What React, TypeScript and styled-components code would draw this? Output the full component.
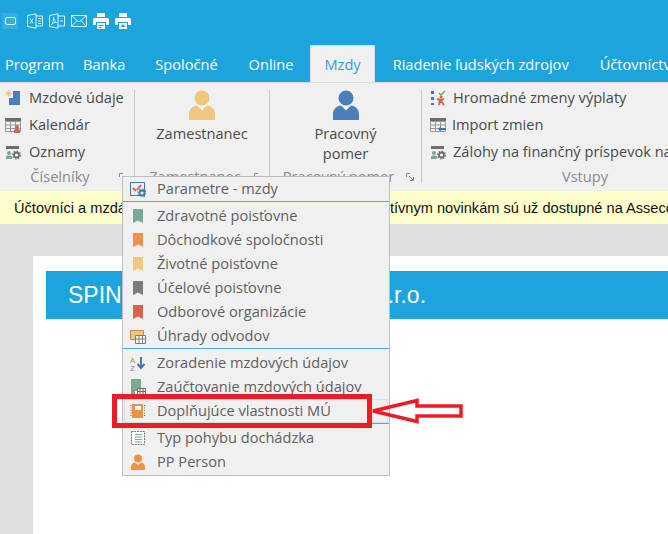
import React from 'react';
import styled, { createGlobalStyle } from 'styled-components';

const GlobalStyle = createGlobalStyle`
  html, body {
    margin: 0;
    padding: 0;
    background: #e0e0e0;
  }
  body {
    font-family: "Open Sans", "Noto Sans", sans-serif;
  }
`;

const Window = styled.div`
  position: relative;
  width: 668px;
  height: 534px;
  overflow: hidden;
  display: flex;
  flex-direction: column;
  background: #e0e0e0;
`;

const QuickBar = styled.div`
  height: 45px;
  box-sizing: border-box;
  flex: none;
  background: #1ca4dd;
  display: flex;
  align-items: center;
  gap: 6px;
  padding: 0 0 3px 2px;
`;

const QuickIcon = styled.svg`
  width: 16px;
  height: 16px;
  flex: none;
`;

const RestoreButton = styled.div`
  width: 16px;
  height: 16px;
  margin-right: 3px;
  display: flex;
  align-items: center;
  justify-content: center;
  background: #36aee1;
`;

const RestoreGlyph = styled.div`
  width: 9px;
  height: 6px;
  border: 1px solid #fff;
  border-radius: 2px;
`;

const TabBar = styled.div`
  height: 37px;
  flex: none;
  background: #1ca4dd;
  display: flex;
  white-space: nowrap;
  font-size: 14.6px;
`;

const Tab = styled.div<{ $active?: boolean; $left?: number; $right?: number }>`
  box-sizing: border-box;
  height: 37px;
  padding: 0 ${(p) => p.$right ?? 15}px 0 ${(p) => p.$left ?? 16}px;
  display: flex;
  align-items: center;
  color: ${(p) => (p.$active ? '#2aa5dc' : '#fff')};
  background: ${(p) => (p.$active ? '#f0f0f0' : 'transparent')};
  box-shadow: ${(p) => (p.$active ? 'inset 0 1px 0 #dcdcdc, inset 1px 0 0 #dcdcdc, inset -1px 0 0 #dcdcdc' : 'none')};
`;

const Ribbon = styled.div`
  height: 109px;
  flex: none;
  box-sizing: border-box;
  background: #f0f0f0;
  border-top: 1px solid #dcdcdc;
  display: flex;
  white-space: nowrap;
  font-size: 14.6px;
  color: #4a4a4a;
`;

const Group = styled.div<{ $width: number }>`
  position: relative;
  width: ${(p) => p.$width}px;
  flex: none;
  display: flex;
  flex-direction: column;
`;

const GroupBody = styled.div`
  height: 83px;
  flex: none;
  display: flex;
  flex-direction: column;
`;

const GroupRows = styled(GroupBody)<{ $pad: number }>`
  padding: 1px 0 0 ${(p) => p.$pad}px;
  box-sizing: border-box;
`;

const RibbonRow = styled.div<{ $gap?: number }>`
  height: 27px;
  box-sizing: border-box;
  padding-bottom: 1px;
  display: flex;
  align-items: center;
  gap: ${(p) => p.$gap ?? 8}px;
`;

const LargeButton = styled(GroupBody)`
  align-items: center;
  padding-top: 6px;
  box-sizing: border-box;
  text-align: center;
  line-height: 20px;
`;

const LargeIcon = styled.svg`
  width: 32px;
  height: 30px;
  margin: 1px 0 3px;
`;

const GroupLabel = styled.div<{ $launcher?: boolean }>`
  height: 22px;
  line-height: 20px;
  text-align: center;
  padding-right: ${(p) => (p.$launcher ? 14 : 0)}px;
  color: #8b8b8b;
  font-size: 14.6px;
`;

const Launcher = styled.svg`
  position: absolute;
  right: 7px;
  bottom: 10px;
  width: 8px;
  height: 8px;
`;

const Divider = styled.div`
  width: 1px;
  flex: none;
  margin: 7px 0 8px;
  background: #c8c8c8;
`;

const Banner = styled.div`
  height: 33px;
  flex: none;
  background: #ffffcc;
  display: flex;
  align-items: center;
  padding-left: 14px;
  white-space: nowrap;
  color: #111;
  font-family: "Liberation Sans", sans-serif;
  font-size: 14.6px;
`;

const Gap = styled.span<{ $width: number }>`
  display: inline-block;
  flex: none;
  width: ${(p) => p.$width}px;
`;

const Content = styled.div`
  flex: 1;
  margin: 32px 0 0 33px;
  padding: 15px 0 0 13px;
  background: #fff;
`;

const PageHeader = styled.div`
  height: 48px;
  background: #1ca4dd;
  display: flex;
  align-items: center;
  padding-left: 22px;
  white-space: nowrap;
  color: #fff;
  font-family: "Liberation Sans", sans-serif;
  font-size: 23px;
`;

const Menu = styled.div`
  position: absolute;
  left: 122px;
  top: 176px;
  width: 268px;
  box-sizing: border-box;
  background: #f0f0f0;
  border: 1px solid #bdbdbd;
  color: #606060;
  font-size: 14.6px;
  white-space: nowrap;
  padding-bottom: 1px;
`;

const MenuRow = styled.div<{ $selected?: boolean }>`
  height: 24px;
  box-sizing: border-box;
  display: flex;
  align-items: center;
  gap: 11px;
  padding: 0 0 2px 5px;
  margin: 0 1px;
  border: 1px solid ${(p) => (p.$selected ? '#d3dde6' : 'transparent')};
`;

const MenuIcon = styled.svg`
  width: 16px;
  height: 16px;
  flex: none;
  margin-top: 2px;
`;

const MenuRule = styled.div`
  height: 1px;
  margin-bottom: 2px;
  background: #43b0e0;
`;

const Callout = styled.div`
  position: absolute;
  left: 112px;
  top: 394px;
  width: 260px;
  height: 34px;
  box-sizing: border-box;
  border: 5px solid #ed1c24;
`;

const CalloutArrow = styled.svg`
  position: absolute;
  left: 370px;
  top: 396px;
  width: 94px;
  height: 30px;
`;

const ExcelGlyph = () => (
  <QuickIcon viewBox="0 0 16 16" fill="none" stroke="#dff3fb" strokeWidth="1">
    <path d="M.5 2.500 9 .8v14.400l-8.500-1.700zM9 3h6.500v10H9M11 5.500h3M11 8h3M11 10.500h3" />
    <path d="M3 5.500l3 5M6 5.500l-3 5" />
  </QuickIcon>
);

const PdfGlyph = () => (
  <QuickIcon viewBox="0 0 16 16" fill="none" stroke="#dff3fb" strokeWidth="1">
    <path d="M.5 2.500 9 .8v14.400l-8.500-1.700zM9 3h6.500v10H9M11 8h3" />
    <path d="M2 12c2-2 3-5 2.500-7.500C4 3.500 6 9 7.500 9.500 6 9 3.500 10 2 12z" />
  </QuickIcon>
);

const MailGlyph = () => (
  <QuickIcon viewBox="0 0 16 16" fill="none" stroke="#dff3fb" strokeWidth="1">
    <path d="M.5 2.500h15v11H.5zM.5 2.500 8 9l7.500-6.500M.5 13.500 6 7.500M15.500 13.500 10 7.500" />
  </QuickIcon>
);

const PrintGlyph = ({ preview }: { preview?: boolean }) => (
  <QuickIcon viewBox="0 0 16 16">
    <path fill="#fff" d="M4 0h8v4H4zM1.500 5h13A1.500 1.500 0 0 1 16 6.500V12h-3V9H3v3H0V6.500A1.500 1.500 0 0 1 1.500 5z" />
    <path fill="#fff" d="M4 10h8v6H4z" />
    {preview ? <path fill="#1ca4dd" d="M8 11l2.500 3h-5z" /> : <path fill="#1ca4dd" d="M5.500 12h5v1h-5zM5.500 14h3v1h-3z" />}
  </QuickIcon>
);

const PersonGlyph = ({ color }: { color: string }) => (
  <LargeIcon viewBox="0 0 32 30">
    <circle cx="16" cy="8" r="7.500" fill={color} />
    <path fill={color} d="M3 30v-6c0-5 4-8 8-8.500l5 5 5-5c4 .5 8 3.500 8 8.500v6z" />
  </LargeIcon>
);

const Launch = () => (
  <Launcher viewBox="0 0 8 8" fill="none" stroke="#8a8a8a">
    <path d="M.5 4V.5H4M7.500 4v3.500H4M3 3l4 4" />
  </Launcher>
);

const SmallIcon = ({ children }: { children: React.ReactNode }) => (
  <MenuIcon viewBox="0 0 16 16">{children}</MenuIcon>
);

const Ribbonmark = ({ color }: { color: string }) => (
  <SmallIcon>
    <path fill={color} d="M3 1h10v14l-5-2.500L3 15z" />
  </SmallIcon>
);

const gear = (x: number, y: number, c: string) => (
  <>
    <circle cx={x} cy={y} r="2.500" fill="none" stroke={c} strokeWidth="1.800" />
    <circle cx={x} cy={y} r="4" fill="none" stroke={c} strokeWidth="1.200" strokeDasharray="1.500 1.600" />
  </>
);

const calendarBase = (
  <>
    <path fill="#6d6d6d" d="M0 1h16v3H0z" />
    <path fill="none" stroke="#9a9a9a" d="M.5 4.500h15v10H.5zM5.500 4.500v10M10.500 4.500v10M.5 8h15M.5 11.500h15" />
  </>
);

export default function App() {
  return (
    <Window>
      <GlobalStyle />

      <QuickBar>
        <RestoreButton>
          <RestoreGlyph />
        </RestoreButton>
        <ExcelGlyph />
        <PdfGlyph />
        <MailGlyph />
        <PrintGlyph />
        <PrintGlyph preview />
      </QuickBar>

      <TabBar>
        <Tab $left={5} $right={3}>Program</Tab>
        <Tab $right={14}>Banka</Tab>
        <Tab>Spoločné</Tab>
        <Tab $right={17}>Online</Tab>
        <Tab $active $left={14} $right={14}>Mzdy</Tab>
        <Tab $left={18}>Riadenie ľudských zdrojov</Tab>
        <Tab>Účtovníctvo</Tab>
      </TabBar>

      <Ribbon>
        <Group $width={134}>
          <GroupRows $pad={5}>
            <RibbonRow>
              <SmallIcon>
                <circle cx="3.500" cy="3.500" r="2" fill="#efc77e" />
                <path stroke="#efc77e" d="M3.500 0v7M0 3.500h7M1 1l5 5M6 1 1 6" />
                <path fill="#4a7fb8" d="M8 1h7v14H4V8h4z" />
              </SmallIcon>
              Mzdové údaje
            </RibbonRow>
            <RibbonRow>
              <SmallIcon>
                {calendarBase}
                <circle cx="12" cy="10" r="2" fill="#d9634a" />
                <path fill="#d9634a" d="M9 16v-2.500c0-1 1-1.500 3-1.500s3 .5 3 1.500V16z" />
              </SmallIcon>
              Kalendár
            </RibbonRow>
            <RibbonRow>
              <SmallIcon>
                <path fill="#6d6d6d" d="M1 2h13v3H1z" />
                <circle cx="4" cy="9" r="2" fill="#7aa894" />
                <path fill="#7aa894" d="M1 15v-2c0-1 1-1.500 3-1.500s3 .5 3 1.500v2z" />
                {gear(11.500, 11, '#6d6d6d')}
              </SmallIcon>
              Oznamy
            </RibbonRow>
          </GroupRows>
          <GroupLabel $launcher>Číselníky</GroupLabel>
          <Launch />
        </Group>
        <Divider />

        <Group $width={134}>
          <LargeButton>
            <PersonGlyph color="#efc77e" />
            Zamestnanec
          </LargeButton>
          <GroupLabel $launcher>Zamestnanec</GroupLabel>
          <Launch />
        </Group>
        <Divider />

        <Group $width={151}>
          <LargeButton>
            <PersonGlyph color="#4a7fb8" />
            Pracovný
            <br />
            pomer
          </LargeButton>
          <GroupLabel $launcher>Pracovný pomer</GroupLabel>
          <Launch />
        </Group>
        <Divider />

        <Group $width={326}>
          <GroupRows $pad={8}>
            <RibbonRow $gap={7}>
              <SmallIcon>
                <path fill="#3f78b5" d="M1 1h3v3H1zM1 7h3v3H1zM1 13h3v2H1z" />
                <path fill="none" stroke="#6aa86a" strokeWidth="1.500" d="M9 3l2 2 4-4" />
                <circle cx="11" cy="7" r="1.500" fill="#d9634a" />
                <path fill="none" stroke="#d9634a" strokeWidth="2" d="M7 9l4 1 3-1M10 10l-1 5M11 11l3 4" />
              </SmallIcon>
              Hromadné zmeny výplaty
            </RibbonRow>
            <RibbonRow $gap={6}>
              <SmallIcon>
                {calendarBase}
                <path fill="#3f78b5" d="M8 12l3-3v2h5v2h-5v2z" />
              </SmallIcon>
              Import zmien
            </RibbonRow>
            <RibbonRow $gap={7}>
              <SmallIcon>
                <path fill="#6d6d6d" d="M1 2h13v3H1z" />
                <circle cx="4" cy="9" r="2" fill="#7aa894" />
                <path fill="#7aa894" d="M1 15v-2c0-1 1-1.500 3-1.500s3 .5 3 1.500v2z" />
                {gear(11.500, 11, '#6d6d6d')}
              </SmallIcon>
              Zálohy na finančný príspevok na
            </RibbonRow>
          </GroupRows>
          <GroupLabel>Vstupy</GroupLabel>
        </Group>
      </Ribbon>

      <Banner>
        Účtovníci a mzdá
        <Gap $width={264} />
        tívnym novinkám sú už dostupné na Asseco
      </Banner>

      <Content>
        <PageHeader>
          SPIN
          <Gap $width={266} />
          .r.o.
        </PageHeader>
      </Content>

      <Menu>
        <MenuRow>
          <SmallIcon>
            <path fill="none" stroke="#3f78b5" d="M.5 1.500h14v13H.5z" />
            <path fill="none" stroke="#d9634a" strokeWidth="2" d="M3 7l3 3M7 9l4-5" />
            {gear(12, 12, '#3f78b5')}
          </SmallIcon>
          Parametre - mzdy
        </MenuRow>
        <MenuRule />
        <MenuRow><Ribbonmark color="#7aa894" />Zdravotné poisťovne</MenuRow>
        <MenuRow><Ribbonmark color="#ea9448" />Dôchodkové spoločnosti</MenuRow>
        <MenuRow><Ribbonmark color="#efc77e" />Životné poisťovne</MenuRow>
        <MenuRow><Ribbonmark color="#7b7b7b" />Účelové poisťovne</MenuRow>
        <MenuRow><Ribbonmark color="#d9634a" />Odborové organizácie</MenuRow>
        <MenuRow>
          <SmallIcon>
            <path fill="#efc77e" stroke="#c98d3f" d="M.5 2.500h13v9H.5z" />
            <path fill="#fff" stroke="#7b7b7b" d="M5.500 7.500h10v8h-10zM5.500 11h10M9 7.500v8M12.500 7.500v8" />
          </SmallIcon>
          Úhrady odvodov
        </MenuRow>
        <MenuRule />
        <MenuRow>
          <SmallIcon>
            <text x="0" y="7.500" fontSize="8" fill="#c9923f" fontFamily="Liberation Sans">A</text>
            <text x="0" y="15.500" fontSize="8" fill="#9a6fc0" fontFamily="Liberation Sans">Z</text>
            <path fill="none" stroke="#3f78b5" strokeWidth="2" d="M11 2v11M7.500 9l3.500 4 3.500-4" />
          </SmallIcon>
          Zoradenie mzdových údajov
        </MenuRow>
        <MenuRow>
          <SmallIcon>
            <path fill="#7aa894" d="M1 0h10v12H5v3H1z" />
            <path fill="#f0f0f0" stroke="#6d6d6d" d="M7.500 9.500h8v6h-8zM10 9.500v6M13 9.500v6M7.500 12.500h8" />
          </SmallIcon>
          Zaúčtovanie mzdových údajov
        </MenuRow>
        <MenuRow $selected>
          <SmallIcon>
            <path fill="#ea9448" d="M2 1h11v14H2z" />
            <path fill="#fff" d="M5 3h6v4H5z" />
            <path stroke="#6d6d6d" strokeDasharray="1 1.500" d="M14.500 2v12M1 2v12" />
          </SmallIcon>
          Doplňujúce vlastnosti MÚ
        </MenuRow>
        <MenuRule />
        <MenuRow>
          <SmallIcon>
            <path fill="#fff" stroke="#7b7b7b" strokeDasharray="2 .8" d="M1.500 1.500h13v13h-13z" />
            <path stroke="#7aa894" d="M5 4.500h7M5 7h7M5 9.500h7M5 12h7" />
          </SmallIcon>
          Typ pohybu dochádzka
        </MenuRow>
        <MenuRow>
          <SmallIcon>
            <circle cx="8" cy="4.500" r="4" fill="#ea9448" />
            <path fill="#ea9448" d="M1 16v-3c0-3 2-4.500 4-4.500L8 11l3-2.500c2 0 4 1.500 4 4.500v3z" />
          </SmallIcon>
          PP Person
        </MenuRow>
      </Menu>

      <Callout />
      <CalloutArrow viewBox="0 0 94 30">
        <path fill="none" stroke="#ed1c24" strokeWidth="3.500" d="M3 15 47 4.500v5.500h44v10H47v5.500z" />
      </CalloutArrow>
    </Window>
  );
}
